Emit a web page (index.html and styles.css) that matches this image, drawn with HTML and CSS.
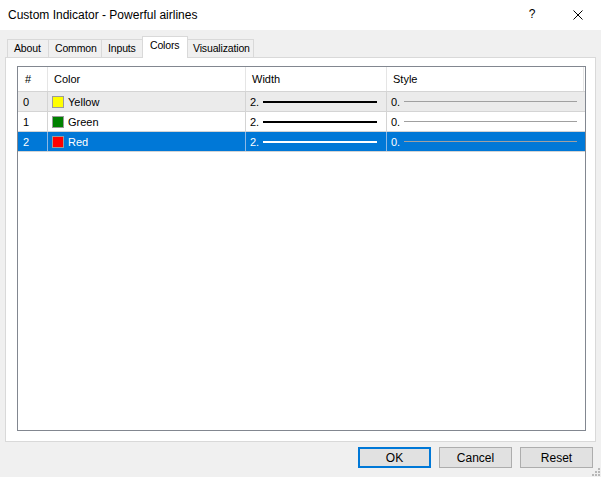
FILE: index.html
```html
<!DOCTYPE html>
<html>
<head>
<meta charset="utf-8">
<link rel="stylesheet" href="styles.css">
</head>
<body>
<div class="window">
  <div class="titlebar">
    <div class="title">Custom Indicator - Powerful airlines</div>
    <div class="tb-btn help">?</div>
    <div class="tb-btn close">
      <svg width="10" height="10" viewBox="0 0 10 10"><path d="M0.5 0.5 L9.5 9.5 M9.5 0.5 L0.5 9.5" stroke="#000" stroke-width="1" fill="none"/></svg>
    </div>
  </div>
  <div class="content">
    <div class="tabs">
      <div class="tab t-about">About</div>
      <div class="tab t-common">Common</div>
      <div class="tab t-inputs">Inputs</div>
      <div class="tab t-colors active">Colors</div>
      <div class="tab t-vis">Visualization</div>
    </div>
    <div class="panel">
      <div class="list">
        <div class="lrow header">
          <div class="c c0">#</div>
          <div class="c c1">Color</div>
          <div class="c c2">Width</div>
          <div class="c c3">Style</div>
        </div>
        <div class="lrow item odd">
          <div class="c c0">0</div>
          <div class="c c1"><span class="sw" style="background:#ffff00"></span><span class="lbl">Yellow</span></div>
          <div class="c c2"><span class="num">2.</span><span class="wline"></span></div>
          <div class="c c3"><span class="num">0.</span><span class="sline"></span></div>
        </div>
        <div class="lrow item">
          <div class="c c0">1</div>
          <div class="c c1"><span class="sw" style="background:#008000"></span><span class="lbl">Green</span></div>
          <div class="c c2"><span class="num">2.</span><span class="wline"></span></div>
          <div class="c c3"><span class="num">0.</span><span class="sline"></span></div>
        </div>
        <div class="lrow item selected">
          <div class="c c0">2</div>
          <div class="c c1"><span class="sw" style="background:#ff0000"></span><span class="lbl">Red</span></div>
          <div class="c c2"><span class="num">2.</span><span class="wline"></span></div>
          <div class="c c3"><span class="num">0.</span><span class="sline"></span></div>
        </div>
      </div>
    </div>
    <div class="buttons">
      <div class="btn default">OK</div>
      <div class="btn">Cancel</div>
      <div class="btn">Reset</div>
    </div>
    <svg class="grip" width="9" height="9" viewBox="0 0 9 9">
      <rect x="7" y="1" width="2" height="2" fill="#b8b8b8"/>
      <rect x="4" y="4" width="2" height="2" fill="#b8b8b8"/>
      <rect x="7" y="4" width="2" height="2" fill="#b8b8b8"/>
      <rect x="1" y="7" width="2" height="2" fill="#b8b8b8"/>
      <rect x="4" y="7" width="2" height="2" fill="#b8b8b8"/>
      <rect x="7" y="7" width="2" height="2" fill="#b8b8b8"/>
    </svg>
  </div>
</div>
</body>
</html>
```
FILE: styles.css
```css
* { box-sizing: border-box; }
html, body { margin: 0; padding: 0; }
body {
  width: 601px;
  height: 477px;
  overflow: hidden;
  font-family: "Liberation Sans", Arial, sans-serif;
  font-size: 11px;
  color: #000;
  background: #f0f0f0;
}
.window { width: 601px; height: 477px; position: relative; }
.titlebar {
  height: 30px;
  background: #fff;
  display: flex;
  align-items: center;
}
.title {
  flex: 1;
  padding-left: 8px;
  font-size: 12px;
  padding-bottom: 1px;
}
.tb-btn {
  width: 46px;
  height: 30px;
  display: flex;
  align-items: center;
  justify-content: center;
}
.help { font-size: 12px; padding-bottom: 2px; }
.close svg { display: block; }
.content {
  height: 447px;
  padding: 6px 5px 0 5px;
  position: relative;
}
.tabs {
  display: flex;
  align-items: flex-end;
  height: 21px;
  padding-left: 2px;
  position: relative;
  z-index: 2;
}
.tab {
  height: 18px;
  border: 1px solid #d9d9d9;
  border-bottom: none;
  background: #f0f0f0;
  padding-left: 6px;
  line-height: 16px;
  white-space: nowrap;
  font-size: 10.5px;
  letter-spacing: -0.15px;
}
.t-about { width: 42px; }
.t-common { width: 54px; margin-left: -1px; }
.t-inputs { width: 43px; margin-left: -1px; }
.t-colors { width: 46px; margin-left: -2px; }
.t-vis { width: 67px; margin-left: -1px; padding-left: 5px; }
.tab.active {
  height: 22px;
  margin-bottom: -1px;
  background: #fff;
  position: relative;
  z-index: 3;
  line-height: 17px;
  padding-left: 7px;
}
.panel {
  width: 591px;
  height: 385px;
  background: #fff;
  border: 1px solid #d9d9d9;
  padding: 8px 0 0 11px;
  position: relative;
  z-index: 1;
}
.list {
  width: 569px;
  height: 365px;
  border: 1px solid #828790;
  background: #fff;
}
.lrow {
  display: flex;
  height: 20px;
  border-bottom: 1px solid #d4d4d4;
}
.lrow.header {
  height: 25px;
  border-bottom: 1px solid #d4d4d4;
}
.c {
  display: flex;
  align-items: center;
  height: 100%;
  border-right: 1px solid #d4d4d4;
  white-space: nowrap;
  overflow: hidden;
}
.c0 { width: 30px; padding-left: 5px; }
.c1 { width: 198px; padding-left: 4px; }
.c2 { width: 141px; padding-left: 4px; }
.c3 { width: 197px; padding-left: 4px; border-right: none; }
.header .c { border-right-color: #e5e5e5; padding-bottom: 1px; }
.header .c0 { padding-left: 7px; }
.header .c1, .header .c2, .header .c3 { padding-left: 6px; }
.header .c3 { border-right: 1px solid #e5e5e5; }
.item.odd { background: #ebebeb; }
.item.selected { background: #0078d7; color: #fff; }
.item.selected .c { border-right-color: #8cb8e6; }
.item.selected .c3 { border-right: none; }
.sw {
  width: 12px;
  height: 12px;
  border: 1px solid #9a9a9a;
  flex: none;
}
.lbl { margin-left: 4px; }
.num { width: 13px; flex: none; }
.wline {
  width: 114px;
  height: 2px;
  background: #000;
  flex: none;
}
.selected .wline { background: #fff; }
.sline {
  width: 173px;
  height: 1px;
  background: #a0a0a0;
  flex: none;
}
.buttons {
  display: flex;
  justify-content: flex-end;
  gap: 8px;
  margin-top: 5px;
  padding-right: 3px;
}
.btn {
  width: 73px;
  height: 21px;
  background: #e1e1e1;
  border: 1px solid #adadad;
  display: flex;
  align-items: center;
  justify-content: center;
  font-size: 12px;
}
.btn.default { border: 2px solid #0078d7; }
.grip {
  position: absolute;
  right: 1px;
  bottom: 1px;
}
```
